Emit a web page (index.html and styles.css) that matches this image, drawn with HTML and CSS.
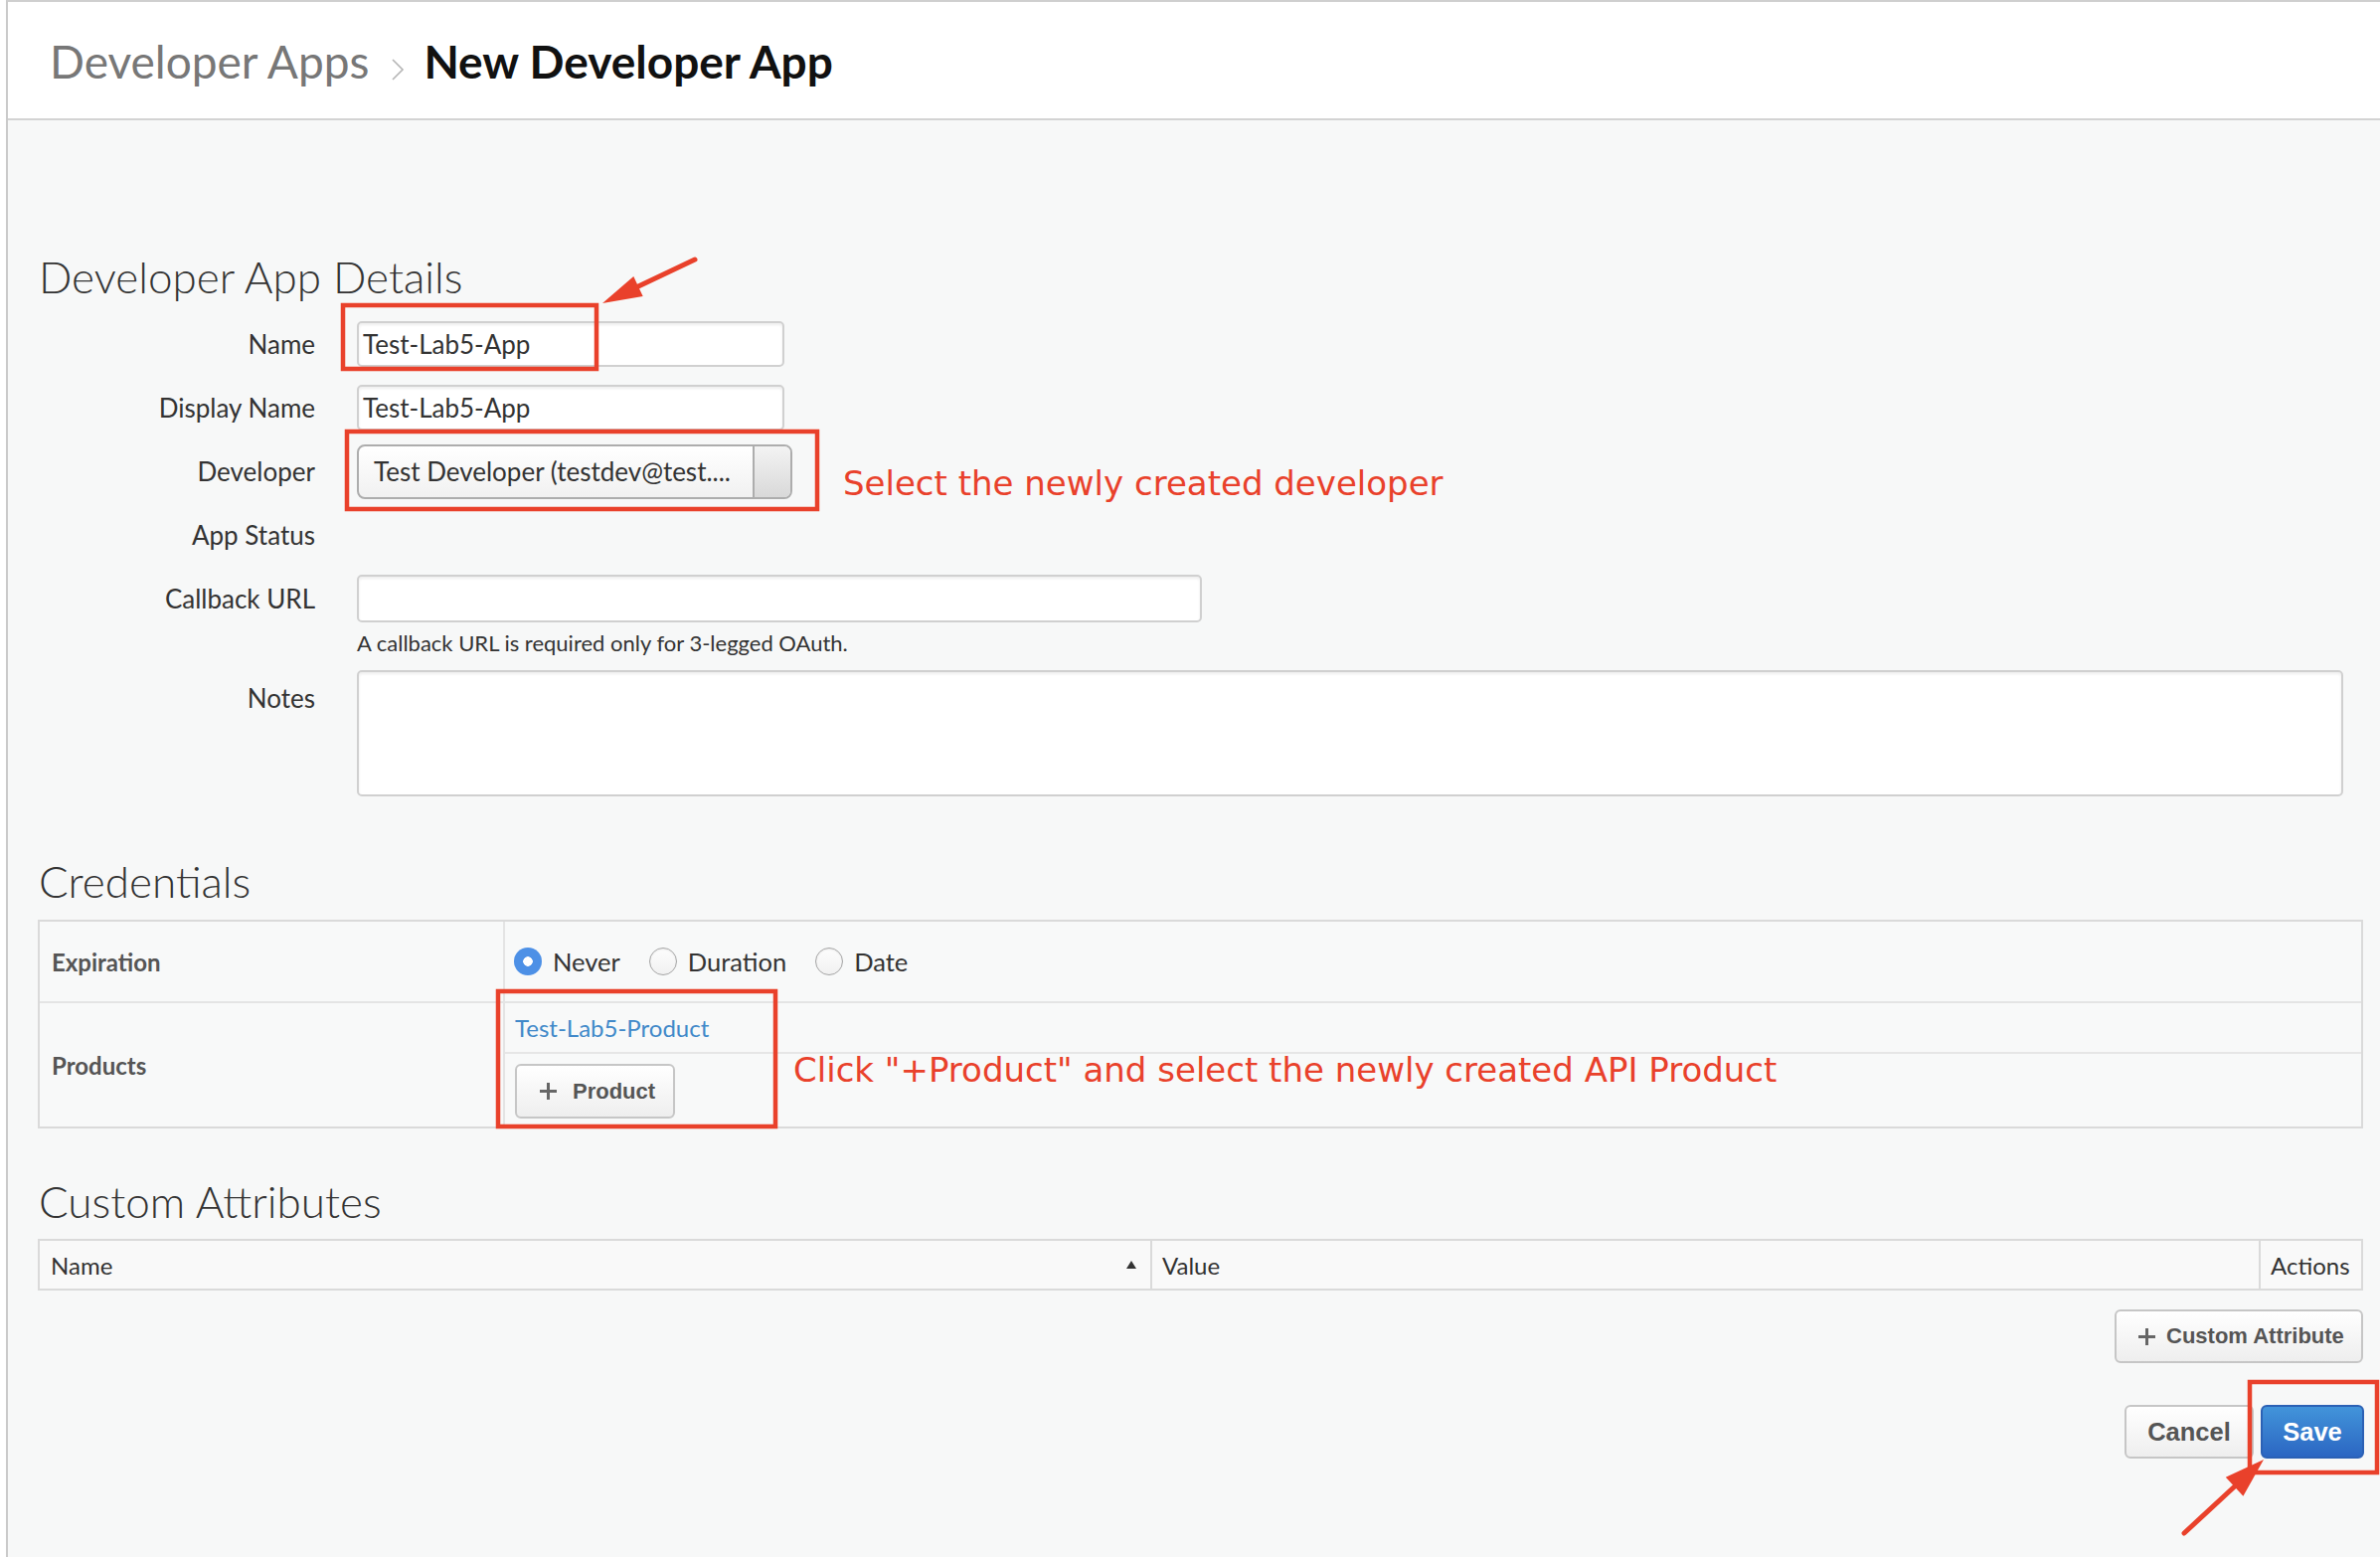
FILE: index.html
```html
<!DOCTYPE html>
<html lang="en">
<head>
<meta charset="utf-8">
<title>New Developer App</title>
<link rel="stylesheet" href="styles.css">
</head>
<body>
<div class="app">
  <header class="topbar">
    <nav class="crumbs">
      <span class="crumb">Developer Apps</span>
      <svg class="crumb-sep" width="14" height="22" viewBox="0 0 14 22"><polyline points="2,1 12,11 2,21" fill="none" stroke="#b5b5b5" stroke-width="1.6"/></svg>
      <span class="crumb-current">New Developer App</span>
    </nav>
  </header>

  <main class="content">
    <h2 class="section-title">Developer App Details</h2>
    <div class="form">
      <div class="form-row">
        <label class="form-label">Name</label>
        <input class="field field-short" type="text" value="Test-Lab5-App">
      </div>
      <div class="form-row">
        <label class="form-label">Display Name</label>
        <input class="field field-short" type="text" value="Test-Lab5-App">
      </div>
      <div class="form-row">
        <label class="form-label">Developer</label>
        <div class="select">
          <span class="select-text">Test Developer (testdev@test....</span>
          <span class="select-btn"></span>
        </div>
      </div>
      <div class="form-row">
        <label class="form-label">App Status</label>
      </div>
      <div class="form-row">
        <label class="form-label">Callback URL</label>
        <input class="field field-long" type="text" value="">
      </div>
      <p class="help">A callback URL is required only for 3-legged OAuth.</p>
      <div class="form-row form-row-notes">
        <label class="form-label">Notes</label>
        <textarea class="field notes"></textarea>
      </div>
    </div>

    <h2 class="section-title section-gap">Credentials</h2>
    <div class="cred">
      <div class="cred-row cred-row-exp">
        <div class="cred-key">Expiration</div>
        <div class="cred-val radios">
          <span class="radio radio-on"></span><span class="radio-label">Never</span>
          <span class="radio"></span><span class="radio-label">Duration</span>
          <span class="radio"></span><span class="radio-label">Date</span>
        </div>
      </div>
      <div class="cred-row">
        <div class="cred-key">Products</div>
        <div class="cred-val">
          <div class="prod-item"><a class="prod-link">Test-Lab5-Product</a></div>
          <div class="prod-actions">
            <button class="btn btn-add"><span class="plus"></span>Product</button>
          </div>
        </div>
      </div>
    </div>

    <h2 class="section-title section-gap-2">Custom Attributes</h2>
    <div class="attr-table">
      <div class="attr-th attr-name">Name<span class="sort-up"></span></div>
      <div class="attr-th attr-value">Value</div>
      <div class="attr-th attr-actions">Actions</div>
    </div>
    <div class="attr-add-row">
      <button class="btn btn-attr"><span class="plus"></span>Custom Attribute</button>
    </div>
    <div class="footer-actions">
      <button class="btn btn-cancel">Cancel</button>
      <button class="btn btn-save">Save</button>
    </div>
  </main>
</div>

<div class="note note-dev">Select the newly created developer</div>
<div class="note note-prod">Click "+Product" and select the newly created API Product</div>

<svg class="marks" width="2394" height="1566" viewBox="0 0 2394 1566">
  <g fill="none" stroke="#e9412b" stroke-width="4.5">
    <rect x="345" y="307" width="255" height="64"/>
    <rect x="349" y="434" width="473" height="78"/>
    <rect x="501" y="997" width="279" height="136"/>
    <rect x="2263" y="1390" width="128" height="91"/>
  </g>
  <g stroke="#e9412b" stroke-width="5" stroke-linecap="round">
    <line x1="699" y1="261" x2="640" y2="289"/>
    <line x1="2197" y1="1542" x2="2250" y2="1493"/>
  </g>
  <g fill="#e9412b">
    <polygon points="606,305 646.7,297.9 637.3,278.1"/>
    <polygon points="2277,1468 2256.4,1504.7 2238.8,1485.7"/>
  </g>
</svg>
</body>
</html>
```

FILE: styles.css
```css
* { box-sizing: border-box; }

html, body {
  margin: 0;
  padding: 0;
}

body {
  position: relative;
  width: 2394px;
  height: 1566px;
  overflow: hidden;
  background: #ffffff;
  font-family: "Lato", "Liberation Sans", sans-serif;
  color: #333;
}

.app {
  margin-left: 6px;
  border-left: 2px solid #cacaca;
  border-top: 2px solid #cfcfcf;
  background: #f7f8f8;
  height: 1566px;
}

/* Header */
.topbar {
  height: 119px;
  background: #ffffff;
  border-bottom: 2px solid #d3d3d3;
  padding: 36px 0 0 42px;
}

.crumbs {
  display: flex;
  align-items: baseline;
  font-size: 46px;
  line-height: 48px;
}

.crumb {
  color: #777;
}

.crumb-sep {
  margin: 0 19px 0 22px;
  position: relative;
  top: 2px;
}

.crumb-current {
  color: #111;
  font-weight: 700;
}

/* Content */
.content {
  padding: 131px 17px 0 30px;
}

.section-title {
  margin: 0 0 0 1px;
  font-size: 44px;
  line-height: 53px;
  font-weight: 300;
  color: #333;
}

.form {
  margin-top: 9px;
}

.form-row {
  display: flex;
  align-items: center;
  height: 64px;
}

.form-label {
  width: 279px;
  margin-right: 42px;
  text-align: right;
  font-size: 26px;
  color: #333;
}

.field {
  height: 46px;
  background: #fff;
  border: 2px solid #d0d0d0;
  border-radius: 5px;
  box-shadow: inset 0 2px 3px rgba(0, 0, 0, 0.07);
  font-family: "Lato", "Liberation Sans", sans-serif;
  font-size: 26px;
  color: #333;
  padding: 0 4px;
  outline: none;
}

.field-short { width: 430px; }
.field-long { width: 850px; height: 48px; }

.select {
  display: flex;
  width: 438px;
  height: 55px;
  border: 2px solid #adadad;
  border-radius: 8px;
  overflow: hidden;
  background: linear-gradient(#ffffff, #f1f1f1);
}

.select-text {
  flex: 1;
  padding-left: 15px;
  font-size: 26px;
  line-height: 50px;
  color: #333;
  white-space: nowrap;
}

.select-btn {
  width: 38px;
  border-left: 2px solid #adadad;
  background: linear-gradient(#f3f3f3, #d9d9d9);
}

.help {
  margin: 0 0 0 321px;
  font-size: 22px;
  line-height: 26px;
  color: #333;
}

.form-row-notes {
  height: auto;
  align-items: flex-start;
  margin-top: 14px;
}

.form-row-notes .form-label {
  line-height: 46px;
  padding-top: 5px;
}

.notes {
  width: 1998px;
  height: 127px;
  resize: none;
}

.section-gap { margin-top: 59px; }
.section-gap-2 { margin-top: 47px; }

/* Credentials */
.cred {
  margin-top: 12px;
  border: 2px solid #dadada;
  background: #f8f9f9;
}

.cred-row {
  display: flex;
}

.cred-row + .cred-row {
  border-top: 2px solid #e4e4e4;
}

.cred-row-exp {
  height: 80px;
}

.cred-key {
  width: 468px;
  border-right: 2px solid #e4e4e4;
  display: flex;
  align-items: center;
  padding-left: 12px;
  font-size: 24px;
  font-weight: 700;
  color: #555;
}

.cred-val {
  flex: 1;
}

.radios {
  display: flex;
  align-items: center;
  padding-left: 9px;
}

.radio {
  width: 28px;
  height: 28px;
  border-radius: 50%;
  border: 1.5px solid #a5a5a5;
  background: linear-gradient(#fdfdfd, #f1f1f1);
  box-shadow: inset 0 1px 2px rgba(0,0,0,0.08);
  margin-right: 11px;
  flex: none;
}

.radio-on {
  border: none;
  background: radial-gradient(circle, #ffffff 0 4.5px, #4d90e6 5px);
  box-shadow: none;
}

.radio-label {
  font-size: 25.5px;
  color: #333;
  margin-right: 29px;
}

.prod-item {
  height: 51px;
  border-bottom: 2px solid #e6e6e6;
  padding-left: 10px;
  display: flex;
  align-items: center;
}

.prod-link {
  font-size: 24px;
  color: #4189c9;
  text-decoration: none;
}

.prod-actions {
  padding: 10px 0 8px 10px;
}

/* Buttons */
.btn {
  display: inline-flex;
  align-items: center;
  justify-content: center;
  height: 55px;
  border: 2px solid #c6c6c6;
  border-radius: 6px;
  background: linear-gradient(#ffffff, #eeeeee);
  font-family: "Liberation Sans", Arial, sans-serif;
  font-weight: 700;
  font-size: 22px;
  color: #555;
  padding: 0;
  cursor: pointer;
}

.plus {
  position: relative;
  width: 17px;
  height: 17px;
  flex: none;
}

.plus::before,
.plus::after {
  content: "";
  position: absolute;
  background: #666;
}

.plus::before {
  left: 0;
  top: 7px;
  width: 17px;
  height: 3px;
}

.plus::after {
  left: 7px;
  top: 0;
  width: 3px;
  height: 17px;
}

.btn-add {
  width: 161px;
  justify-content: flex-start;
  padding-left: 23px;
}

.btn-add .plus {
  margin-right: 16px;
}

/* Custom attributes */
.attr-table {
  margin-top: 11px;
  display: grid;
  grid-template-columns: 1119px 1fr 101px;
  border: 2px solid #dadada;
  background: #f9f9f9;
  height: 52px;
}

.attr-th {
  display: flex;
  align-items: center;
  font-size: 24px;
  color: #333;
  padding-left: 11px;
}

.attr-name {
  justify-content: space-between;
  padding-right: 14px;
  border-right: 2px solid #dadada;
}

.attr-value {
  padding-left: 10px;
  border-right: 2px solid #dadada;
}

.attr-actions {
  padding-left: 10px;
}

.sort-up {
  width: 0;
  height: 0;
  border-left: 5px solid transparent;
  border-right: 5px solid transparent;
  border-bottom: 8px solid #333;
}

.attr-add-row {
  display: flex;
  justify-content: flex-end;
  margin-top: 19px;
}

.btn-attr {
  width: 250px;
  height: 54px;
  justify-content: flex-start;
  padding-left: 22px;
}

.btn-attr .plus {
  margin-right: 11px;
}

.footer-actions {
  display: flex;
  justify-content: flex-end;
  gap: 7px;
  margin-top: 42px;
  margin-right: -1px;
}

.btn-cancel {
  width: 130px;
  height: 54px;
  font-size: 25.5px;
}

.btn-save {
  width: 104px;
  height: 54px;
  font-size: 25.5px;
  color: #fff;
  border-color: #2b61b5;
  background: linear-gradient(#4294da, #2b66c2);
}

/* Annotation overlay */
.note {
  position: absolute;
  font-family: "DejaVu Sans", sans-serif;
  font-size: 34px;
  line-height: 40px;
  color: #e9412b;
  white-space: nowrap;
}

.note-dev {
  left: 848px;
  top: 466px;
}

.note-prod {
  left: 798px;
  top: 1056px;
}

.marks {
  position: absolute;
  left: 0;
  top: 0;
  pointer-events: none;
}
```
